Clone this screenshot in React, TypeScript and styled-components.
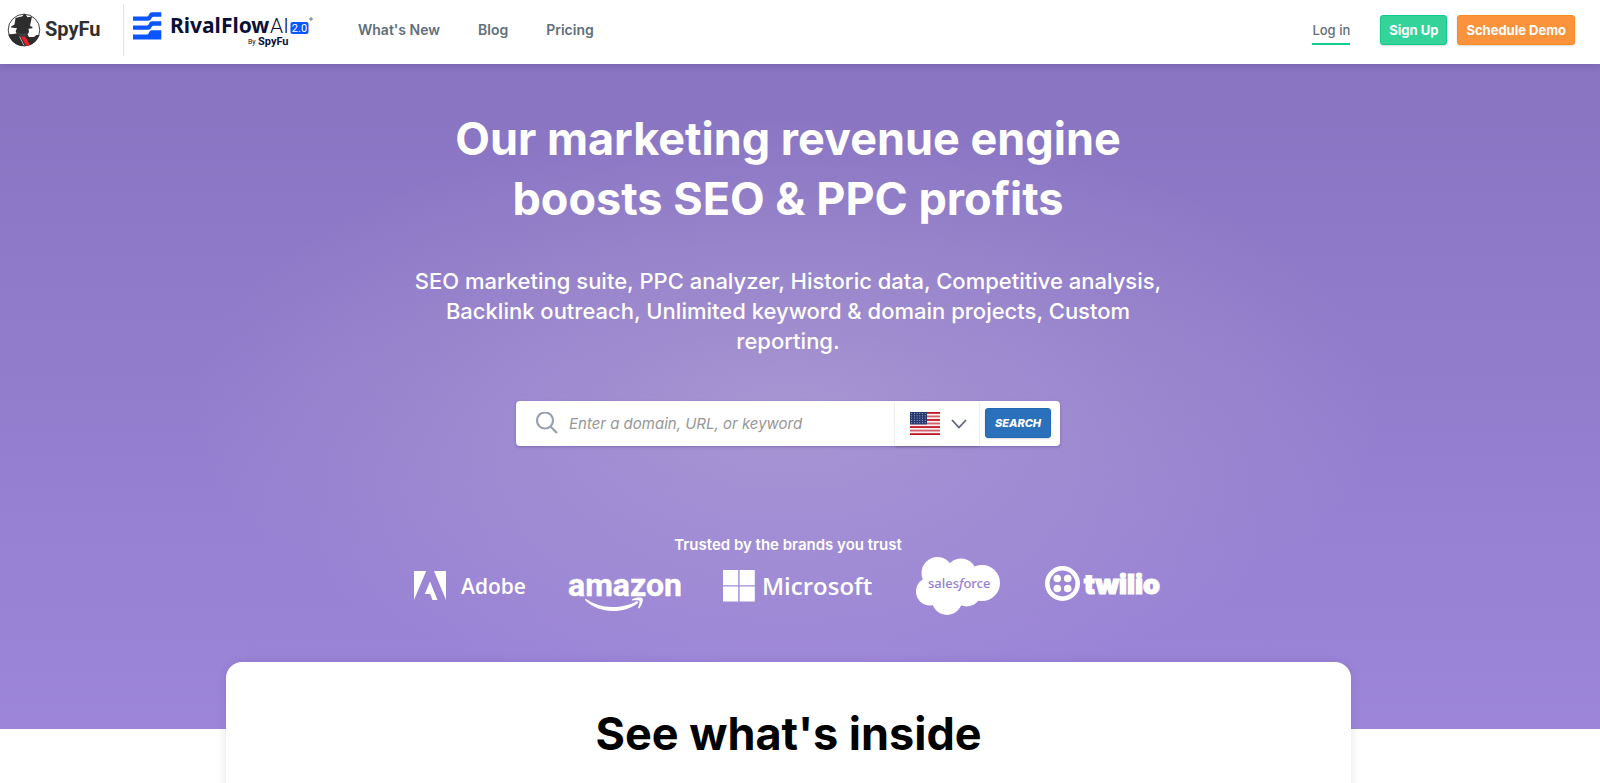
import React from 'react';
import styled, { createGlobalStyle } from 'styled-components';

const Global = createGlobalStyle`
  *, *::before, *::after { box-sizing: border-box; }
  body { margin: 0; background: #fff; font-family: Inter, "Liberation Sans", sans-serif; overflow-x: hidden; }
  h1, h2, p { margin: 0; }
`;

const Page = styled.div`
  height: 100vh;
  overflow: hidden;
`;

const Header = styled.header`
  height: 64px;
  padding: 0 25px 4px 7px;
  display: flex;
  align-items: center;
  background: #fff;
  position: relative;
  z-index: 1;
  box-shadow: 0 1px 8px rgba(40, 20, 90, 0.18);
`;

const BrandLink = styled.a`
  display: flex;
  text-decoration: none;
  svg { display: block; }
`;

const Divider = styled.span`
  width: 1px;
  height: 52px;
  margin: 0 9px 0 21px;
  background: #e2e4e8;
`;

const Nav = styled.nav`
  display: flex;
  gap: 38px;
  margin: 0 auto 0 43px;
`;

const NavLink = styled.a`
  color: #606f7b;
  font-size: 14px;
  font-weight: 600;
  line-height: 20px;
  text-decoration: none;
`;

const Actions = styled.div`
  display: flex;
  align-items: center;
  gap: 10px;
`;

const LoginLink = styled.a`
  margin-right: 20px;
  padding-top: 2px;
  color: #606f7b;
  font-size: 13px;
  font-weight: 500;
  line-height: 26px;
  text-decoration: none;
  border-bottom: 2px solid #15cd8f;
`;

const ActionButton = styled.button<{ $tone: string; $edge: string }>`
  height: 30px;
  padding: 0 8px;
  border: 1px solid ${(p) => p.$edge};
  border-radius: 3px;
  background: ${(p) => p.$tone};
  color: #fff;
  font: 700 13px/20px Inter, "Liberation Sans", sans-serif;
  box-shadow: 0 1px 2px rgba(0, 0, 0, 0.15);
`;

const Hero = styled.section`
  padding: 45px 24px 67px 0;
  display: flex;
  flex-direction: column;
  align-items: center;
  color: #fff;
  text-align: center;
  background:
    radial-gradient(ellipse 600px 290px at calc(50% - 12px) 345px, rgba(226, 220, 226, 0.25), rgba(226, 220, 226, 0) 100%),
    linear-gradient(#8874c1, #9d86d9);
`;

const Title = styled.h1`
  width: 720px;
  max-width: 100%;
  font-size: 45px;
  font-weight: 700;
  line-height: 60px;
`;

const Lead = styled.p`
  width: 768px;
  max-width: 100%;
  margin-top: 37px;
  font-size: 22px;
  font-weight: 500;
  line-height: 30px;
`;

const SearchBar = styled.form`
  width: 544px;
  max-width: 100%;
  height: 45px;
  margin-top: 45px;
  padding: 0 9px 0 19px;
  display: flex;
  align-items: center;
  background: #fff;
  border-radius: 4px;
  box-shadow: 0 1px 3px rgba(60, 30, 120, 0.3);
`;

const SearchInput = styled.input`
  flex: 1;
  min-width: 0;
  height: 100%;
  padding: 0 10px;
  border: 0;
  outline: 0;
  background: transparent;
  font: italic 400 15px/20px Inter, "Liberation Sans", sans-serif;
  &::placeholder { color: #979797; opacity: 1; }
`;

const CountryButton = styled.button`
  width: 84px;
  height: 45px;
  margin-right: 6px;
  padding: 0 12px 0 15px;
  display: flex;
  align-items: center;
  justify-content: space-between;
  border: 0;
  background: #fff;
  box-shadow: 0 1px 2px rgba(0, 0, 0, 0.2);
`;

const SearchButton = styled.button`
  width: 66px;
  height: 30px;
  margin-bottom: 2px;
  padding: 0;
  border: 1px solid #2368b4;
  border-radius: 3px;
  background: #2a70ba;
  color: #fff;
  font: italic 800 11px/16px Inter, "Liberation Sans", sans-serif;
  box-shadow: 0 1px 2px rgba(0, 0, 0, 0.15);
`;

const Trusted = styled.p`
  margin-top: 89px;
  font-size: 15px;
  font-weight: 600;
  line-height: 20px;
`;

const Brands = styled.div`
  margin: 1px 0 46px;
  display: flex;
  align-items: center;
  gap: 44px;
  svg { display: block; overflow: visible; }
`;

const Inside = styled.section`
  width: calc(100% - 475px);
  min-height: 240px;
  margin: -67px 249px 0 226px;
  padding-top: 42px;
  position: relative;
  background: #fff;
  border-radius: 16px;
  box-shadow: 0 1px 10px rgba(60, 40, 110, 0.14);
  text-align: center;
`;

const InsideTitle = styled.h2`
  color: #000;
  font-size: 45px;
  font-weight: 700;
  line-height: 60px;
`;

const SpyFuLogo = () => (
  <svg width="95" height="36" viewBox="0 0 95 36" role="img" aria-label="SpyFu">
    <clipPath id="badge"><circle cx="17" cy="18" r="16.2" /></clipPath>
    <circle cx="17" cy="18" r="15.8" fill="#fff" stroke="#444" strokeWidth="1" />
    <g clipPath="url(#badge)">
      <path d="M0 22.500 6 22l3.600-.5L8.600 19l1.500-2.800-6-.6v-1L7.500 12.500 8.500 6l7-1.800 2-3 3 4 4.500-.7-2 9.500 2.500 1-.2 1.200-3.800.6.500 3.200-1.500 2.500 1.500 2.500 5 0 2.500-2L35 23v14H2z" fill="#2d2d2d" />
      <path d="M9.500 20 12 21.500l4 .4 4.500-.8-1.500 2.400-5.500.2-3-1.600z" fill="#444" />
      <path d="M13.500 24.500h4.800L23 33l-3.500 1z" fill="#e8202a" />
      <path d="m12.500 24.500 4.500 9" stroke="#fff" strokeWidth=".6" />
    </g>
    <text x="38" y="24" fontFamily="Roboto, sans-serif" fontWeight="700" fontSize="20" fill="#2f2f2f">SpyFu</text>
  </svg>
);

const RivalFlowLogo = () => (
  <svg width="182" height="40" viewBox="0 0 182 40" role="img" aria-label="RivalFlowAI 2.0 by SpyFu">
    <g fill="#0b55ff">
      <path d="M0 6.500h14q1.500 0 2-2Q16.700 2.200 19 2.200h9.300v4.500H20.500q-1.700 0-2.300 2-.7 2.100-3 2.100H0z" />
      <path d="M0 15.500h14q1.500 0 2-2 .7-2.300 3-2.300h9.300v4.500H20.500q-1.700 0-2.300 2-.7 2.100-3 2.100H0z" />
      <path d="M0 24.500h14q1.500 0 2-2 .7-2.300 3-2.300h9.300v9.300H0z" />
      <rect x="157.500" y="12" width="18" height="12" rx="2" />
    </g>
    <text x="37" y="23" fontFamily="Noto Sans, sans-serif" fontWeight="700" fontSize="21" fill="#0a1038">RivalFlow</text>
    <text x="137" y="23" fontFamily="Roboto, sans-serif" fontWeight="300" fontSize="21" fill="#0a1038">AI</text>
    <text x="166.500" y="22" textAnchor="middle" fontFamily="Roboto, sans-serif" fontSize="11" fill="#fff">2.0</text>
    <circle cx="178" cy="9" r="1.200" fill="none" stroke="#0a1038" strokeWidth=".6" />
    <text x="115" y="34" fontFamily="Roboto, sans-serif" fontSize="7" fill="#0a1038">By</text>
    <text x="125" y="35" fontFamily="Roboto, sans-serif" fontWeight="700" fontSize="11" fill="#0a1038">SpyFu</text>
  </svg>
);

const SearchIcon = () => (
  <svg width="24" height="24" viewBox="0 0 24 24" fill="none" stroke="#98a0b0" strokeWidth="2.200" aria-hidden="true">
    <circle cx="10" cy="8.500" r="8" />
    <path d="m15.500 14.500 6.500 6.500" />
  </svg>
);

const Flag = () => (
  <svg width="30" height="23" viewBox="0 0 30 23" aria-hidden="true">
    <rect width="30" height="23" fill="#fbeeee" />
    {[0, 1, 2, 3, 4, 5, 6].map((i) => (
      <rect key={i} y={i * 3.54} width="30" height="1.77" fill={i % 2 ? '#d0626c' : '#bf1522'} />
    ))}
    <rect width="17" height="12.4" fill="#26366e" />
    {[0, 1, 2, 3, 4].map((row) =>
      [0, 1, 2, 3, 4, 5].map((col) => (
        <circle key={`${row}-${col}`} cx={1.7 + col * 2.7} cy={1.5 + row * 2.3} r="0.5" fill="#c5cbe0" />
      ))
    )}
  </svg>
);

const Chevron = () => (
  <svg width="16" height="10" viewBox="0 0 16 10" fill="none" stroke="#5b6678" strokeWidth="1.800" aria-hidden="true">
    <path d="m1 1 7 7.500L15 1" />
  </svg>
);

const Adobe = () => (
  <svg width="111" height="60" viewBox="0 0 111 60" fill="#fff" role="img" aria-label="Adobe">
    <path d="M0 15h12.200L0 44zM20 15h12v29zM16 25.500 23.500 44h-5l-2.300-6h-5.400z" />
    <text x="47" y="38" fontFamily="Open Sans, sans-serif" fontWeight="600" fontSize="21">Adobe</text>
  </svg>
);

const Amazon = () => (
  <svg width="110" height="60" viewBox="0 0 110 60" fill="#fff" role="img" aria-label="amazon">
    <text x="-1" y="40" fontFamily="Roboto, sans-serif" fontWeight="700" fontSize="32" stroke="#fff" strokeWidth=".4">amazon</text>
    <path d="M16.500 42.500C24 48 33 51 43 51c9 0 18-2 25-6l1.500 1.500C63 52.500 53 55 44 55c-11 0-21-4-28-11z" />
    <path d="M63 43.500c3-2.200 9-2.500 10.500-1.200 1 1.700-.5 7.500-3.500 10.200l-1-.5c1-2.500 2-6 1.500-7-1-1-5-.7-7.500-.5z" />
  </svg>
);

const Microsoft = () => (
  <svg width="149" height="60" viewBox="0 0 149 60" fill="#fff" role="img" aria-label="Microsoft">
    <path d="M0 14h15.200v15.200H0zM16.600 14h15.200v15.200H16.600zM0 30.600h15.200v14.900H0zM16.600 30.600h15.200v14.900H16.600z" />
    <text x="39" y="39" fontFamily="Open Sans, sans-serif" fontWeight="600" fontSize="24">Microsoft</text>
  </svg>
);

const Salesforce = () => (
  <svg width="85" height="60" viewBox="0 0 85 60" role="img" aria-label="salesforce">
    <g fill="#fff">
      <circle cx="21.500" cy="17" r="16" />
      <circle cx="45" cy="18" r="15.500" />
      <circle cx="66" cy="27" r="18" />
      <circle cx="14" cy="35.500" r="14" />
      <circle cx="31" cy="44" r="15" />
      <circle cx="50.500" cy="35.500" r="15" />
      <path d="M15 20h50v18H15z" />
    </g>
    <text x="12" y="32" fontFamily="Noto Sans, sans-serif" fontWeight="500" fontSize="13" fill="#9480d2">
      sales<tspan fontStyle="italic">f</tspan>orce
    </text>
  </svg>
);

const Twilio = () => (
  <svg width="117" height="60" viewBox="0 0 117 60" fill="#fff" role="img" aria-label="twilio">
    <circle cx="17.500" cy="27.500" r="15.200" fill="none" stroke="#fff" strokeWidth="4.600" />
    <circle cx="12.300" cy="22.500" r="3.800" />
    <circle cx="22.700" cy="22.500" r="3.800" />
    <circle cx="12.300" cy="32.500" r="3.800" />
    <circle cx="22.700" cy="32.500" r="3.800" />
    <text x="39" y="38" fontFamily="Inter, sans-serif" fontWeight="900" fontSize="27" stroke="#fff" strokeWidth="1.200">twilio</text>
  </svg>
);

export default function App() {
  return (
    <Page>
      <Global />
      <Header>
        <BrandLink href="#spyfu"><SpyFuLogo /></BrandLink>
        <Divider />
        <BrandLink href="#rivalflow"><RivalFlowLogo /></BrandLink>
        <Nav>
          <NavLink href="#new">What's New</NavLink>
          <NavLink href="#blog">Blog</NavLink>
          <NavLink href="#pricing">Pricing</NavLink>
        </Nav>
        <Actions>
          <LoginLink href="#login">Log in</LoginLink>
          <ActionButton $tone="#34d399" $edge="#10cc8b">Sign Up</ActionButton>
          <ActionButton $tone="#fb923c" $edge="#fb8b1e">Schedule Demo</ActionButton>
        </Actions>
      </Header>
      <Hero>
        <Title>Our marketing revenue engine boosts SEO & PPC profits</Title>
        <Lead>
          SEO marketing suite, PPC analyzer, Historic data, Competitive analysis, Backlink outreach,
          Unlimited keyword & domain projects, Custom reporting.
        </Lead>
        <SearchBar>
          <SearchIcon />
          <SearchInput aria-label="Search" placeholder="Enter a domain, URL, or keyword" />
          <CountryButton type="button" aria-label="Country">
            <Flag />
            <Chevron />
          </CountryButton>
          <SearchButton type="button">SEARCH</SearchButton>
        </SearchBar>
        <Trusted>Trusted by the brands you trust</Trusted>
        <Brands>
          <Adobe />
          <Amazon />
          <Microsoft />
          <Salesforce />
          <Twilio />
        </Brands>
      </Hero>
      <Inside>
        <InsideTitle>See what's inside</InsideTitle>
      </Inside>
    </Page>
  );
}
